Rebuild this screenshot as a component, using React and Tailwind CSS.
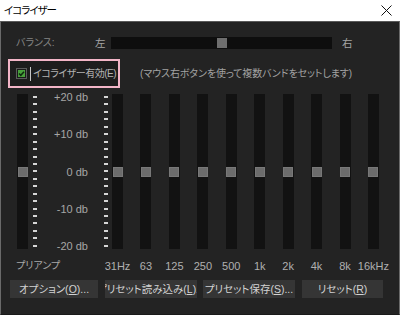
import React from "react";

const bands = ["31Hz", "63", "125", "250", "500", "1k", "2k", "4k", "8k", "16kHz"];
const dbLabels = ["+20 db", "+10 db", "0 db", "-10 db", "-20 db"];

function Track() {
  return (
    <div className="w-[11px] h-[155px] mt-[3px] bg-[#121212] flex items-center justify-center">
      <div className="w-[10px] h-[10px] bg-[#6c6c6c] border border-[#787878]" />
    </div>
  );
}

function Ticks() {
  return (
    <div className="w-[4px] h-[151px] mt-[5px] flex flex-col justify-between">
      {Array.from({ length: 21 }).map((_, i) => (
        <div key={i} className="w-[4px] h-[2px] bg-[#d6d6d6]" />
      ))}
    </div>
  );
}

function Btn({ children, w }) {
  return (
    <div
      className={`${w} h-[18px] bg-[#353535] flex items-center justify-center overflow-hidden whitespace-nowrap text-[10.5px] leading-[18px] text-[#d2d2d2]`}
    >
      <span className="shrink-0">{children}</span>
    </div>
  );
}

export default function App() {
  return (
    <div className="w-[400px] h-[315px] flex flex-col font-['Liberation_Sans','Noto_Sans_CJK_JP',sans-serif] [font-feature-settings:'palt'] overflow-hidden">
      <div className="h-[21px] bg-white flex items-center justify-between shrink-0">
        <span className="pl-[4px] text-[10.5px] tracking-[-1px] text-black leading-[21px]">イコライザー</span>
        <svg width="11" height="11" viewBox="0 0 11 11" className="mr-[8px]">
          <path d="M0.5 0.5 L10.5 10.5 M10.5 0.5 L0.5 10.5" stroke="#111" strokeWidth="1" />
        </svg>
      </div>
      <div className="flex-1 bg-[#232323] border-x border-b border-t border-x-[#6a6a6a] border-t-[#5a5a5a] border-b-[#1a1a1a] flex flex-col">
        {/* balance */}
        <div className="flex items-center h-[12px] mt-[15px]">
          <span className="ml-[15px] w-[79px] text-[10px] text-[#858585] leading-[12px]">バランス:</span>
          <span className="w-[16px] text-[10.5px] text-[#a5a5a5] leading-[12px]">左</span>
          <div className="w-[221px] h-[12px] bg-[#0e0e0e] flex items-center justify-center">
            <div className="w-[10px] h-[10px] bg-[#6e6e6e]" />
          </div>
          <span className="ml-[10px] text-[10.5px] text-[#a5a5a5] leading-[12px]">右</span>
        </div>
        {/* enable */}
        <div className="flex items-center mt-[10px]">
          <div className="ml-[7px] w-[112px] h-[29px] border-[2px] border-[#f2b5c7] bg-[#1d1d1d] flex items-center overflow-hidden">
            <svg width="11" height="11" viewBox="0 0 11 11" className="ml-[6px] shrink-0">
              <rect x="0.5" y="0.5" width="10" height="10" fill="#1a1a1a" stroke="#5c5c5c" />
              <rect x="2" y="2" width="7" height="7" fill="#49a03c" />
              <path d="M3 5.5 L4.8 7.3 L8 3.8" fill="none" stroke="#0e2a0e" strokeWidth="1.5" />
            </svg>
            <div className="ml-[3px] w-[1px] h-[14px] bg-[#c8c8c8] shrink-0" />
            <span className="ml-[2px] text-[10px] tracking-[-0.5px] text-[#b2b2b2] whitespace-nowrap leading-[12px]">
              イコライザー有効(E)
            </span>
          </div>
          <span className="ml-[20px] text-[10px] tracking-[-0.1px] text-[#a2a2a2] whitespace-nowrap leading-[12px]">
            (マウス右ボタンを使って複数バンドをセットします)
          </span>
        </div>
        {/* sliders */}
        <div className="flex items-start mt-[3px]">
          <div className="ml-[16px] w-[11px] flex flex-col items-start">
            <Track />
            <span className="mt-[11px] -ml-[1px] text-[10px] leading-[12px] text-[#a8a8a8] whitespace-nowrap">
              プリアンプ
            </span>
          </div>
          <div className="ml-[5px]">
            <Ticks />
          </div>
          <div className="w-[51px] h-[161px] flex flex-col justify-between">
            {dbLabels.map((l) => (
              <div key={l} className="h-[12px] leading-[12px] text-[11px] text-right text-[#a6a6a6] whitespace-nowrap">
                {l}
              </div>
            ))}
          </div>
          <div className="ml-[16px]">
            <Ticks />
          </div>
          <div className="ml-[4px] flex gap-[17.44px]">
            {bands.map((b) => (
              <div key={b} className="w-[11px] flex flex-col items-center">
                <Track />
                <span className="mt-[11px] text-[11px] leading-[12px] text-[#b0b0b0] whitespace-nowrap">{b}</span>
              </div>
            ))}
          </div>
        </div>
        {/* buttons */}
        <div className="flex mt-[8px] ml-[9px]">
          <Btn w="w-[88px]">
            オプション(<span className="underline">O</span>)...
          </Btn>
          <div className="ml-[7px]">
            <Btn w="w-[92px]">
              プリセット読み込み(<span className="underline">L</span>)...
            </Btn>
          </div>
          <div className="ml-[6px]">
            <Btn w="w-[92px]">
              プリセット保存(<span className="underline">S</span>)...
            </Btn>
          </div>
          <div className="ml-[7px]">
            <Btn w="w-[81px]">
              リセット(<span className="underline">R</span>)
            </Btn>
          </div>
        </div>
      </div>
    </div>
  );
}
